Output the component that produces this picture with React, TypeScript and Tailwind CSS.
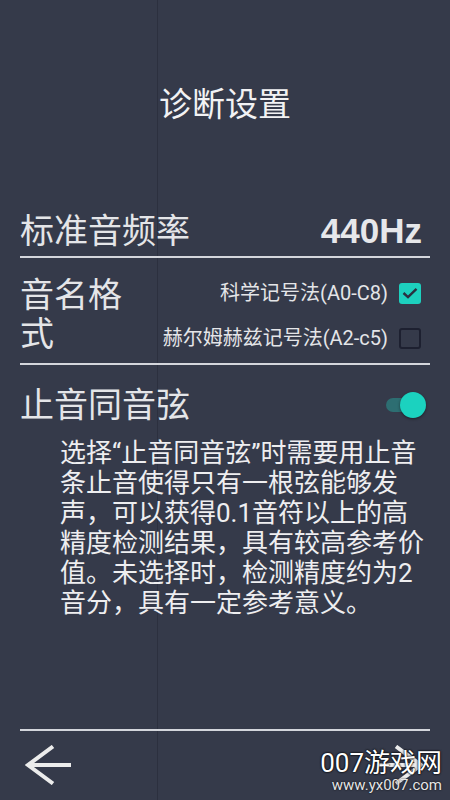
const FONT = "font-['Roboto','Noto_Sans_CJK_SC',sans-serif]";

const Divider = () => <div className="h-[2px] bg-[#d4d6dc]" />;

const CheckBox = ({ checked }: { checked: boolean }) =>
  checked ? (
    <div className="flex h-[21px] w-[22px] items-center justify-center rounded-[3px] bg-[#1dd0be]">
      <svg width="16" height="12" viewBox="0 0 16 12" fill="none">
        <path d="M1.5 6 L6 10.2 L14.5 1.8" stroke="#2a3040" strokeWidth="2.4" />
      </svg>
    </div>
  ) : (
    <div className="h-[21px] w-[22px] rounded-[3px] border-2 border-[#1d2030]" />
  );

const Option = ({ label, checked }: { label: string; checked: boolean }) => (
  <div className="flex h-[22px] items-center gap-[11px]">
    <span className="text-[20px] leading-[22px] text-[#e4e5e8]">{label}</span>
    <CheckBox checked={checked} />
  </div>
);

const Toggle = () => (
  <div className="relative mr-[4px] h-[26px] w-[40px]">
    <div className="absolute left-0 top-[6px] h-[14px] w-[34px] rounded-full bg-[#2d6e72]" />
    <div className="absolute left-[14px] top-0 h-[26px] w-[26px] rounded-full bg-[#1bd2bf] shadow-[0_1px_3px_rgba(0,0,0,0.45)]" />
  </div>
);

const Arrow = ({ flip }: { flip?: boolean }) => (
  <svg
    width="47"
    height="40"
    viewBox="0 0 47 40"
    fill="none"
    className={flip ? '-scale-x-100' : ''}
  >
    <path d="M46 20 H4 M28 1.5 L3 20 L28 38.5" stroke="#ececec" strokeWidth="4" />
  </svg>
);

export default function App() {
  return (
    <div className={`relative h-[800px] w-[450px] overflow-hidden bg-[#353a4a] ${FONT}`}>
      {/* faint seam down the screen */}
      <div className="absolute bottom-0 left-[157px] top-0 w-px bg-[#2c303f]" />

      <div className="relative flex flex-col px-[20px]">
        <h1 className="pt-[88px] text-center text-[33px] font-normal leading-[33px] text-[#f2f2f4]">
          诊断设置
        </h1>

        {/* standard pitch */}
        <div className="mt-[93px] flex h-[34px] items-center justify-between">
          <span className="text-[34px] leading-[34px] text-[#e4e5e8]">标准音频率</span>
          <span className="mr-[8px] font-['Liberation_Sans',sans-serif] text-[35px] font-bold leading-[34px] text-[#e6e7ea]">
            440Hz
          </span>
        </div>
        <div className="mt-[8px]">
          <Divider />
        </div>

        {/* note naming */}
        <div className="flex items-start justify-between pb-[9px] pt-[18px]">
          <span className="w-[110px] text-[34px] leading-[39px] text-[#e4e5e8]">音名格式</span>
          <div className="mr-[9px] mt-[6px] flex flex-col items-end gap-[23px]">
            <Option label="科学记号法(A0-C8)" checked />
            <Option label="赫尔姆赫兹记号法(A2-c5)" checked={false} />
          </div>
        </div>
        <Divider />

        {/* muted string */}
        <div className="mt-[23px] flex h-[34px] items-center justify-between">
          <span className="text-[34px] leading-[34px] text-[#e4e5e8]">止音同音弦</span>
          <Toggle />
        </div>
        <p className="mt-[16px] pl-[40px] text-[26px] leading-[30px] text-[#eeeef0]">
          选择“止音同音弦”时需要用止音条止音使得只有一根弦能够发声，可以获得0.1音符以上的高精度检测结果，具有较高参考价值。未选择时，检测精度约为2音分，具有一定参考意义。
        </p>

        <div className="mt-[111px]">
          <Divider />
        </div>
        <div className="mt-[14px] flex items-center justify-between pl-[5px] pr-[6px]">
          <Arrow />
          <Arrow flip />
        </div>
      </div>

      <div className="absolute bottom-[6px] right-[8px] flex flex-col items-end">
        <span className="text-[26px] leading-[28px] text-white [text-shadow:0_0_2px_#000,0_0_2px_#000]">
          007游戏网
        </span>
        <span className="text-[15px] leading-[17px] text-[#e6e6e6] [text-shadow:0_0_2px_#000]">
          www.yx007.com
        </span>
      </div>
    </div>
  );
}
